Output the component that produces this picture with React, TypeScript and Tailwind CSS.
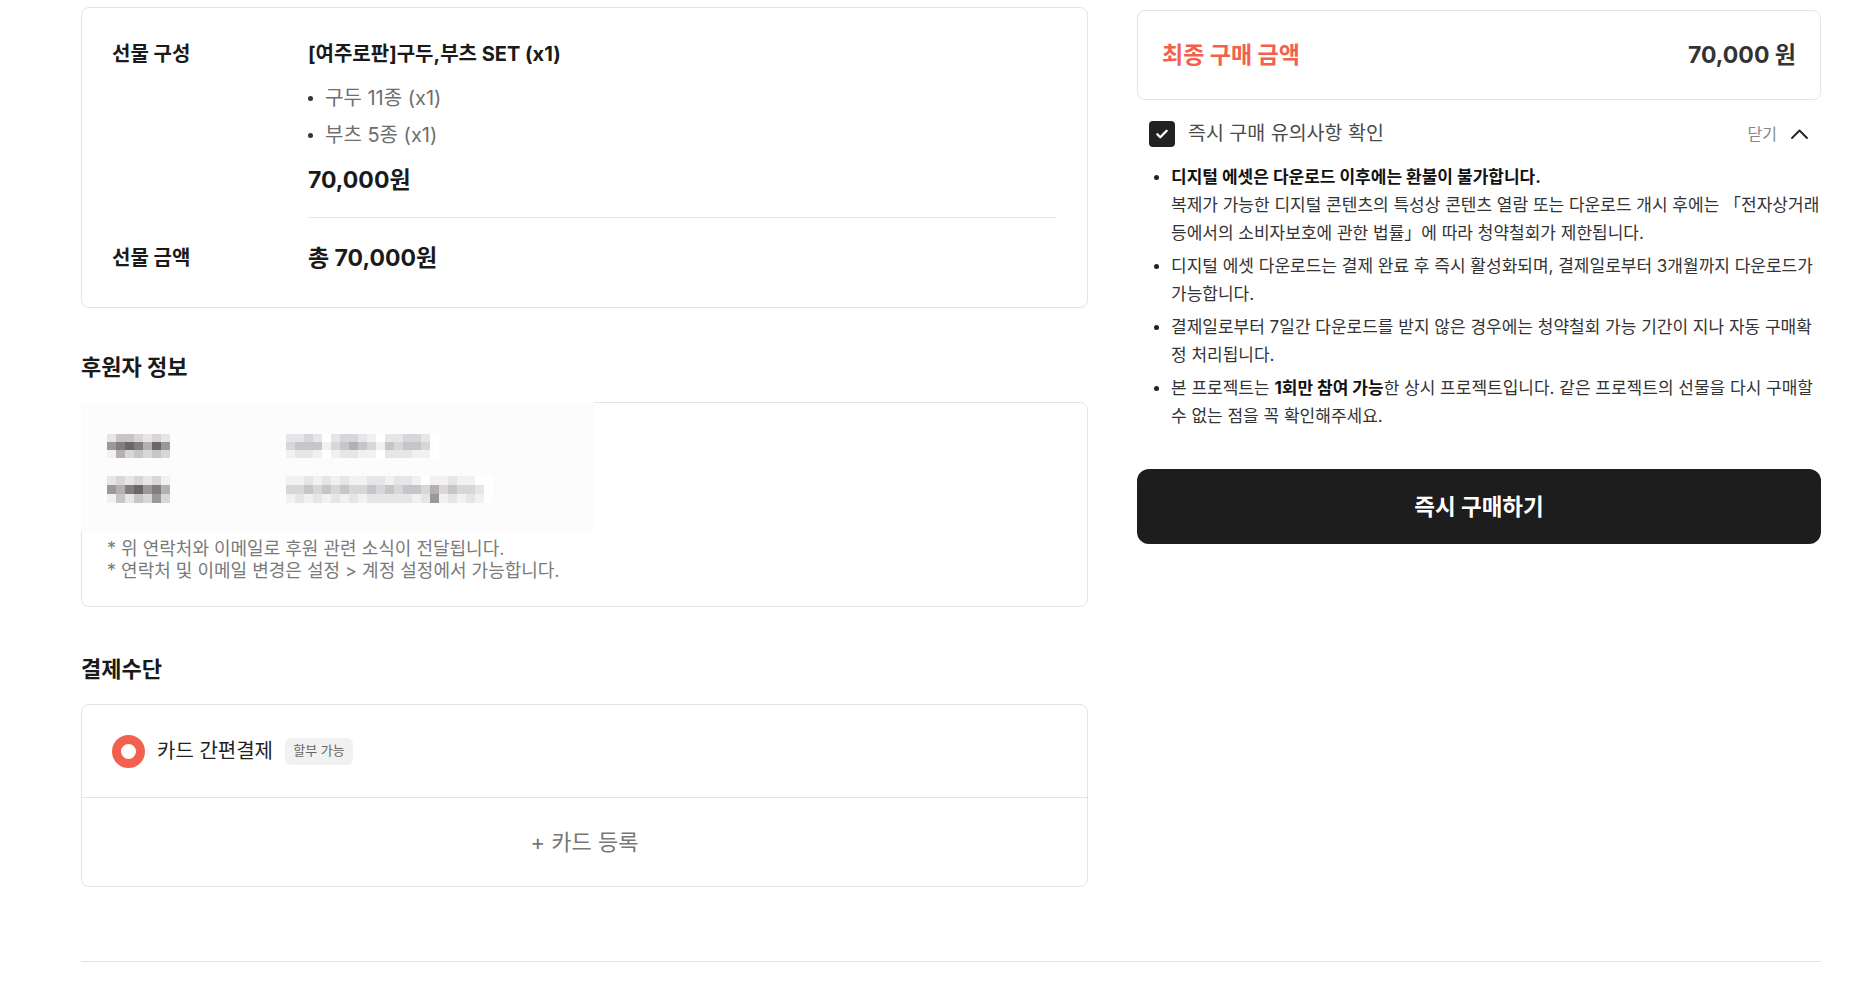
const SHADES = [
  "bg-white",
  "bg-[#f2f1f2]",
  "bg-[#e6e5e7]",
  "bg-[#d8d6d9]",
  "bg-[#c8c5c8]",
  "bg-[#b3afb2]",
  "bg-[#9c9799]",
  "bg-[#837d7f]",
  "bg-[#6b6668]",
]

// privacy mosaic blocks (blurred contact info)
const MOSAIC = {
  label1: ["2443232", "6787586", "1534343"],
  value1: ["22320233210223320", "34441345431434430", "12210122110222110"],
  label2: ["2323231", "6578675", "1424363"],
  value2: ["11212121122122101121100", "33434343343434435343320", "12121212122222126121210"],
}

function Mosaic({ rows, cell }: { rows: string[]; cell: string }) {
  return (
    <div className="flex flex-col">
      {rows.map((row, i) => (
        <div key={i} className="flex">
          {row.split("").map((c, j) => (
            <div key={j} className={`${cell} ${SHADES[Number(c)]}`} />
          ))}
        </div>
      ))}
    </div>
  )
}

function GiftCard() {
  return (
    <div className="border border-[#e4e4e4] rounded-lg px-[30px] pt-[32px] pb-[34px]">
      <div className="flex">
        <div className="w-[196px] text-[20px] font-bold leading-[28px] text-[#1a1a1a]">선물 구성</div>
        <div className="flex-1">
          <div className="text-[20px] font-bold leading-[28px] text-[#1a1a1a]">[여주로판]구두,부츠 SET (x1)</div>
          <ul className="mt-[16px] flex flex-col gap-[9px]">
            {["구두 11종 (x1)", "부츠 5종 (x1)"].map((t) => (
              <li key={t} className="flex items-center h-[28px]">
                <span className="w-[5px] h-[5px] rounded-full bg-[#333] mr-[12px]" />
                <span className="text-[20px] leading-[28px] text-[#6e6e6e]">{t}</span>
              </li>
            ))}
          </ul>
          <div className="mt-[16px] text-[23px] font-bold leading-[30px] text-[#1a1a1a]">70,000원</div>
          <div className="mt-[22px] border-t border-[#e8e8e8]" />
        </div>
      </div>
      <div className="flex mt-[25px]">
        <div className="w-[196px] text-[20px] font-bold leading-[30px] text-[#1a1a1a]">선물 금액</div>
        <div className="text-[23px] font-bold leading-[30px] text-[#1a1a1a]">총 70,000원</div>
      </div>
    </div>
  )
}

function SponsorCard() {
  return (
    <div className="relative border border-[#e4e4e4] rounded-lg px-[25px] pt-[31px] pb-[24px]">
      <div className="absolute -left-px -top-px w-[513px] h-[130px] bg-[#fcfcfc]" />
      <div className="relative flex flex-col gap-[18px]">
        <div className="flex items-center">
          <div className="w-[179px]">
            <Mosaic rows={MOSAIC.label1} cell="w-[9px] h-[8px]" />
          </div>
          <Mosaic rows={MOSAIC.value1} cell="w-[9px] h-[8px]" />
        </div>
        <div className="flex items-center">
          <div className="w-[179px]">
            <Mosaic rows={MOSAIC.label2} cell="w-[9px] h-[9px]" />
          </div>
          <Mosaic rows={MOSAIC.value2} cell="w-[9px] h-[9px]" />
        </div>
      </div>
      <div className="relative mt-[35px] text-[18px] leading-[22px] text-[#7a7a7a]">
        <p>* 위 연락처와 이메일로 후원 관련 소식이 전달됩니다.</p>
        <p>* 연락처 및 이메일 변경은 설정 &gt; 계정 설정에서 가능합니다.</p>
      </div>
    </div>
  )
}

function PaymentCard() {
  return (
    <div className="border border-[#e4e4e4] rounded-lg">
      <div className="h-[92px] flex items-center px-[30px]">
        <span className="w-[33px] h-[33px] rounded-full border-[9px] border-[#f2604e] bg-white" />
        <span className="ml-[12px] text-[20px] leading-[28px] text-[#222]">카드 간편결제</span>
        <span className="ml-[12px] h-[27px] w-[68px] flex items-center justify-center rounded-md bg-[#f1f1f1] text-[13px] text-[#666]">
          할부 가능
        </span>
      </div>
      <div className="h-[89px] border-t border-[#e4e4e4] flex items-center justify-center text-[22px] text-[#777]">
        + 카드 등록
      </div>
    </div>
  )
}

const NOTICES: { lines: React.ReactNode[] }[] = [
  {
    lines: [
      <span className="font-bold text-[#111]">디지털 에셋은 다운로드 이후에는 환불이 불가합니다.</span>,
      "복제가 가능한 디지털 콘텐츠의 특성상 콘텐츠 열람 또는 다운로드 개시 후에는 「전자상거래",
      "등에서의 소비자보호에 관한 법률」에 따라 청약철회가 제한됩니다.",
    ],
  },
  {
    lines: [
      "디지털 에셋 다운로드는 결제 완료 후 즉시 활성화되며, 결제일로부터 3개월까지 다운로드가",
      "가능합니다.",
    ],
  },
  {
    lines: [
      "결제일로부터 7일간 다운로드를 받지 않은 경우에는 청약철회 가능 기간이 지나 자동 구매확",
      "정 처리됩니다.",
    ],
  },
  {
    lines: [
      <>
        본 프로젝트는 <span className="font-bold text-[#111]">1회만 참여 가능</span>한 상시 프로젝트입니다. 같은 프로젝트의 선물을 다시 구매할
      </>,
      "수 없는 점을 꼭 확인해주세요.",
    ],
  },
]

function OrderPanel() {
  return (
    <div className="pt-[3px]">
      <div className="h-[90px] border border-[#e4e4e4] rounded-lg flex items-center justify-between px-[24px]">
        <span className="text-[23px] font-bold text-[#f2604e]">최종 구매 금액</span>
        <span className="text-[23px] font-bold text-[#333]">70,000 원</span>
      </div>

      <div className="mt-[21px] h-[26px] flex items-center justify-between pl-[12px] pr-[13px]">
        <div className="flex items-center">
          <span className="w-[26px] h-[26px] rounded-[4px] bg-[#222] flex items-center justify-center">
            <svg width="14" height="14" viewBox="0 0 24 24" fill="none" stroke="white" strokeWidth="4" strokeLinecap="round" strokeLinejoin="round">
              <path d="M4 12.5l5 5L20 6.5" />
            </svg>
          </span>
          <span className="ml-[13px] text-[19.5px] text-[#4a4a4a]">즉시 구매 유의사항 확인</span>
        </div>
        <div className="flex items-center">
          <span className="text-[16px] text-[#888]">닫기</span>
          <svg className="ml-[14px]" width="17" height="10" viewBox="0 0 17 10" fill="none" stroke="#222" strokeWidth="1.8" strokeLinecap="round" strokeLinejoin="round">
            <path d="M1 9L8.5 1.5L16 9" />
          </svg>
        </div>
      </div>

      <ul className="mt-[16px] pl-[17px] flex flex-col gap-[5px]">
        {NOTICES.map((n, i) => (
          <li key={i} className="flex">
            <div className="w-[17px] h-[28px] flex items-center shrink-0">
              <span className="w-[5px] h-[5px] rounded-full bg-[#222]" />
            </div>
            <div className="text-[17px] leading-[28px] text-[#333]">
              {n.lines.map((l, j) => (
                <div key={j} className="whitespace-nowrap">{l}</div>
              ))}
            </div>
          </li>
        ))}
      </ul>

      <button className="mt-[39px] w-full h-[75px] rounded-[12px] bg-[#1d1d1d] text-white text-[22.5px] font-bold">
        즉시 구매하기
      </button>
    </div>
  )
}

export default function App() {
  return (
    <div className="min-h-screen bg-white font-['Inter','Noto_Sans_CJK_KR',sans-serif] pt-[7px]">
      <div className="ml-[81px] w-[1740px]">
        <div className="grid grid-cols-[1007px_684px] gap-x-[49px] items-start">
          <div>
            <GiftCard />

            <h2 className="mt-[45px] text-[22px] font-bold leading-[28px] text-[#1a1a1a]">후원자 정보</h2>
            <div className="mt-[21px]">
              <SponsorCard />
            </div>

            <h2 className="mt-[48px] text-[22px] font-bold leading-[28px] text-[#1a1a1a]">결제수단</h2>
            <div className="mt-[21px]">
              <PaymentCard />
            </div>
          </div>

          <OrderPanel />
        </div>

        <div className="mt-[74px] border-t border-[#e4e4e4]" />
      </div>
    </div>
  )
}
